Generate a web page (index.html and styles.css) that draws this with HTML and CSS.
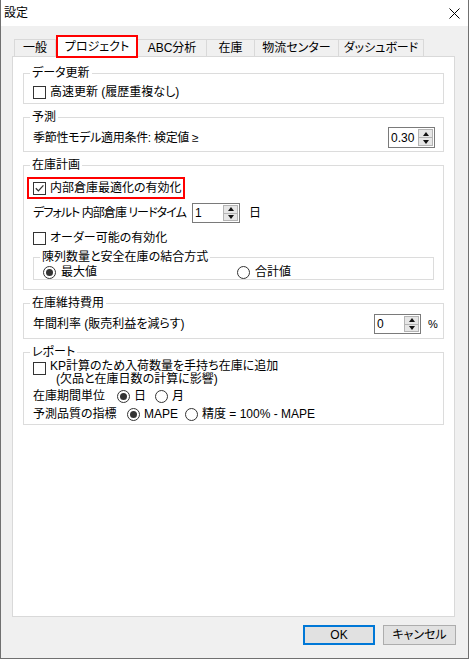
FILE: index.html
```html
<!DOCTYPE html>
<html lang="ja">
<head>
<meta charset="utf-8">
<title>設定</title>
<link rel="stylesheet" href="styles.css">
</head>
<body>
<div class="window">
  <div class="titlebar">
    <span class="title">設定</span>
    <svg class="close" width="11" height="11" viewBox="0 0 11 11"><path d="M0.5 0.5 L10.5 10.5 M10.5 0.5 L0.5 10.5" stroke="#000" stroke-width="1" fill="none"/></svg>
  </div>
  <div class="body">
    <div class="tabs">
      <div class="tab first w42">一般</div>
      <div class="tab sel w82">プロジェクト</div>
      <div class="tab w69">ABC分析</div>
      <div class="tab w48">在庫</div>
      <div class="tab w84">物流センター</div>
      <div class="tab w85">ダッシュボード</div>
    </div>
    <div class="panel">
      <fieldset class="group g1">
        <legend>データ更新</legend>
        <div class="row h16"><span class="cb"></span><span>高速更新 (履歴重複なし)</span></div>
      </fieldset>

      <fieldset class="group g2">
        <legend>予測</legend>
        <div class="row h21">
          <span class="tight">季節性モデル適用条件: 検定値 ≥</span>
          <span class="spin s1"><span class="val">0.30</span><span class="arrows"><span class="up"></span><span class="dn"></span></span></span>
        </div>
      </fieldset>

      <fieldset class="group g3">
        <legend>在庫計画</legend>
        <div class="hl"><span class="cb on"><svg width="11" height="11" viewBox="0 0 11 11"><path d="M1.8 5.2 L4.4 7.9 L9.4 2.4" stroke="#333" stroke-width="1.3" fill="none"/></svg></span><span>内部倉庫最適化の有効化</span></div>
        <div class="row h20 lead">
          <span class="lbl159">デフォルト 内部倉庫 リードタイム</span>
          <span class="spin s2"><span class="val">1</span><span class="arrows"><span class="up"></span><span class="dn"></span></span></span>
          <span class="unit">日</span>
        </div>
        <div class="row h16 order"><span class="cb"></span><span>オーダー可能の有効化</span></div>
        <fieldset class="sub">
          <legend>陳列数量と安全在庫の結合方式</legend>
          <div class="row h14">
            <span class="opt w194"><span class="rb on"></span><span class="rtext5">最大値</span></span>
            <span class="opt"><span class="rb"></span><span class="rtext5">合計値</span></span>
          </div>
        </fieldset>
      </fieldset>

      <fieldset class="group g4">
        <legend>在庫維持費用</legend>
        <div class="row h20 rate">
          <span>年間利率 (販売利益を減らす)</span>
          <span class="cluster">
            <span class="spin s3"><span class="val">0</span><span class="arrows"><span class="up"></span><span class="dn"></span></span></span>
            <span class="pct">%</span>
          </span>
        </div>
      </fieldset>

      <fieldset class="group g5">
        <legend>レポート</legend>
        <div class="rep">
          <span class="cb top"></span>
          <span class="lines">
            <span class="line">KP計算のため入荷数量を手持ち在庫に追加</span>
            <span class="line indent">(欠品と在庫日数の計算に影響)</span>
          </span>
        </div>
        <div class="row h16 r3">
          <span class="lbl84">在庫期間単位</span>
          <span class="opt w38"><span class="rb on"></span><span class="rtext">日</span></span>
          <span class="opt"><span class="rb"></span><span class="rtext">月</span></span>
        </div>
        <div class="row h16 r4">
          <span class="lbl94">予測品質の指標</span>
          <span class="opt w58"><span class="rb on"></span><span class="rtext">MAPE</span></span>
          <span class="opt"><span class="rb"></span><span class="rtext">精度 = 100% - MAPE</span></span>
        </div>
      </fieldset>
    </div>
    <div class="buttons">
      <button class="btn ok">OK</button>
      <button class="btn cancel">キャンセル</button>
    </div>
  </div>
</div>
</body>
</html>
```

FILE: styles.css
```css
* { box-sizing: border-box; }
html, body { margin: 0; padding: 0; }
body {
  width: 469px;
  height: 659px;
  overflow: hidden;
  background: #ffffff;
  font-family: "Liberation Sans", "Noto Sans CJK JP", sans-serif;
  font-size: 12px;
  color: #000;
  font-feature-settings: "palt";
}
.window {
  width: 469px;
  height: 659px;
  border: 1px solid #707070;
  border-top: 0;
  display: flex;
  flex-direction: column;
}
.titlebar {
  flex: none;
  height: 26px;
  background: #fff;
  display: flex;
  align-items: center;
  justify-content: space-between;
  padding: 0 8px 0 3px;
  line-height: 14px;
}
.close { display: block; }
.body {
  flex: 1;
  background: #f0f0f0;
  padding-top: 9px;
  display: flex;
  flex-direction: column;
}
.tabs {
  display: flex;
  align-items: flex-end;
  height: 23px;
  margin-left: 13px;
  position: relative;
  z-index: 1;
}
.tab {
  height: 17px;
  margin-bottom: 2px;
  background: #f0f0f0;
  border: 1px solid #d9d9d9;
  border-left: 0;
  border-bottom: 0;
  display: flex;
  align-items: center;
  justify-content: center;
  line-height: 15px;
  white-space: nowrap;
}
.tab.first { border-left: 1px solid #d9d9d9; }
.tab.sel {
  height: 23px;
  margin-bottom: 0;
  background: #fff;
  border: 2px solid #ff0000;
  padding-top: 2px;
}
.w42 { width: 42px; }
.w82 { width: 82px; }
.w69 { width: 69px; }
.w48 { width: 48px; }
.w84 { width: 84px; }
.w85 { width: 85px; }

.panel {
  margin: -2px 0 0 11px;
  width: 443px;
  height: 561px;
  background: #fff;
  border: 1px solid #d9d9d9;
  padding: 9px 10px 0;
}
fieldset {
  margin: 0;
  border: 1px solid #dcdcdc;
  min-width: 0;
}
legend {
  padding: 0 2px;
  margin-left: -3px;
  height: 15px;
  line-height: 15px;
  white-space: nowrap;
}
.group { margin-top: 6px; padding: 0 9px; }
.group.g1 { margin-top: 0; padding-top: 3px; padding-bottom: 3px; }
.group.g2 { padding-top: 2px; padding-bottom: 3px; }
.group.g3 { padding-top: 4px; padding-bottom: 9px; }
.group.g4 { padding-top: 3px; padding-bottom: 4px; }
.group.g5 { padding-top: 0; padding-bottom: 2px; }

.row {
  display: flex;
  align-items: center;
  white-space: nowrap;
  line-height: 14px;
}
.h14 { height: 14px; }
.h16 { height: 16px; }
.h20 { height: 20px; }
.h21 { height: 21px; }
.tight { letter-spacing: -0.3px; }

.cb {
  flex: none;
  width: 13px;
  height: 13px;
  border: 1px solid #333;
  background: #fff;
  margin-right: 4px;
  display: flex;
  align-items: center;
  justify-content: center;
}
.cb svg { display: block; }
.rb {
  flex: none;
  width: 13px;
  height: 13px;
  border: 1px solid #333;
  border-radius: 50%;
  background: #fff;
  display: flex;
  align-items: center;
  justify-content: center;
}
.rb.on::after {
  content: "";
  width: 7px;
  height: 7px;
  border-radius: 50%;
  background: #333;
}
.opt { display: flex; align-items: center; }
.rtext { margin-left: 4px; }
.rtext5 { margin-left: 5px; }
.w194 { width: 194px; }
.w38 { width: 38px; }
.w58 { width: 58px; }
.lbl159 { width: 159px; flex: none; letter-spacing: -0.95px; }
.lbl84 { width: 84px; flex: none; }
.lbl94 { width: 94px; flex: none; }

.spin {
  flex: none;
  display: flex;
  background: #fff;
  border: 1px solid #7a7a7a;
}
.spin .val { flex: 1; padding-left: 2px; display: flex; align-items: center; line-height: 14px; }
.spin .arrows {
  width: 15px;
  margin: 1px;
  display: flex;
  flex-direction: column;
  border: 1px solid #b4b4b4;
  background: #e6e6e6;
}
.spin .up, .spin .dn {
  flex: 1;
  display: flex;
  align-items: center;
  justify-content: center;
}
.spin .dn { border-top: 1px solid #b4b4b4; }
.spin .up::after {
  content: "";
  border-left: 3px solid transparent;
  border-right: 3px solid transparent;
  border-bottom: 4px solid #111;
}
.spin .dn::after {
  content: "";
  border-left: 3px solid transparent;
  border-right: 3px solid transparent;
  border-top: 4px solid #111;
}
.s1 { width: 47px; height: 21px; margin-left: auto; margin-right: -1px; }
.s2 { width: 48px; height: 20px; }
.s3 { width: 47px; height: 20px; }
.unit { margin-left: 9px; }

.hl {
  display: flex;
  align-items: center;
  width: 158px;
  height: 22px;
  border: 2px solid #ff0000;
  padding-left: 4px;
  margin-left: -6px;
  white-space: nowrap;
  line-height: 14px;
}
.lead { margin-top: 4px; }
.order { margin-top: 7px; }
.sub { margin-top: 4px; padding: 0 9px; }

.rate { margin-right: -4px; }
.cluster { margin-left: auto; display: flex; align-items: center; }
.pct { width: 10px; margin-left: 7px; font-size: 11px; }

.rep { display: flex; align-items: flex-start; white-space: nowrap; }
.cb.top { margin-top: 2px; }
.lines { display: flex; flex-direction: column; }
.line { height: 13px; line-height: 13px; }
.indent { padding-left: 6px; }
.r3 { margin-top: 2px; }
.r4 { margin-top: 2px; }

.buttons {
  display: flex;
  justify-content: flex-end;
  gap: 8px;
  margin-top: 8px;
  padding-right: 12px;
}
.btn {
  height: 20px;
  padding: 0;
  font: inherit;
  color: #000;
  background: #e1e1e1;
  border: 1px solid #adadad;
  display: flex;
  align-items: center;
  justify-content: center;
  line-height: 14px;
}
.btn.ok { width: 72px; border: 2px solid #0078d7; }
.btn.cancel { width: 73px; }
```
